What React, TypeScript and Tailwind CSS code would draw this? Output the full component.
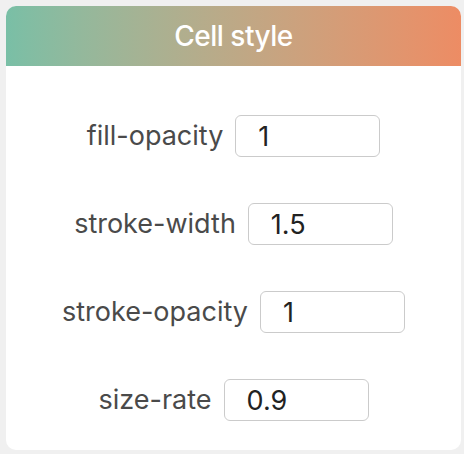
import { useState } from "react";

const FIELDS = [
  { name: "fill-opacity", value: "1" },
  { name: "stroke-width", value: "1.5" },
  { name: "stroke-opacity", value: "1" },
  { name: "size-rate", value: "0.9" },
];

export default function App() {
  const [values, setValues] = useState<string[]>(FIELDS.map((f) => f.value));

  return (
    <div className="w-[464px] h-[454px] bg-[#f0f0f0] pt-[6px] pl-[6px] font-['Inter',sans-serif]">
      <div className="w-[455px] h-[444px] bg-white rounded-[10px] overflow-hidden flex flex-col">
        {/* Header */}
        <div className="h-[60px] shrink-0 flex items-center justify-center bg-gradient-to-r from-[#79bfa6] to-[#ed8c64]">
          <span className="text-white text-[28px] font-medium tracking-[-0.5px]">Cell style</span>
        </div>

        {/* Fields */}
        <div className="flex flex-col items-center gap-[46px] pt-[49px]">
          {FIELDS.map((f, i) => (
            <div key={f.name} className="flex items-center gap-[12px]">
              <label className="text-[27px] text-[#4a4a4a]">{f.name}</label>
              <input
                value={values[i]}
                onChange={(e) =>
                  setValues((v) => v.map((x, j) => (j === i ? e.target.value : x)))
                }
                className="w-[145px] h-[42px] rounded-[6px] border-[1.5px] border-[#cbcbcb] px-[22px] text-[27px] text-[#222] focus:outline-none"
              />
            </div>
          ))}
        </div>
      </div>
    </div>
  );
}
